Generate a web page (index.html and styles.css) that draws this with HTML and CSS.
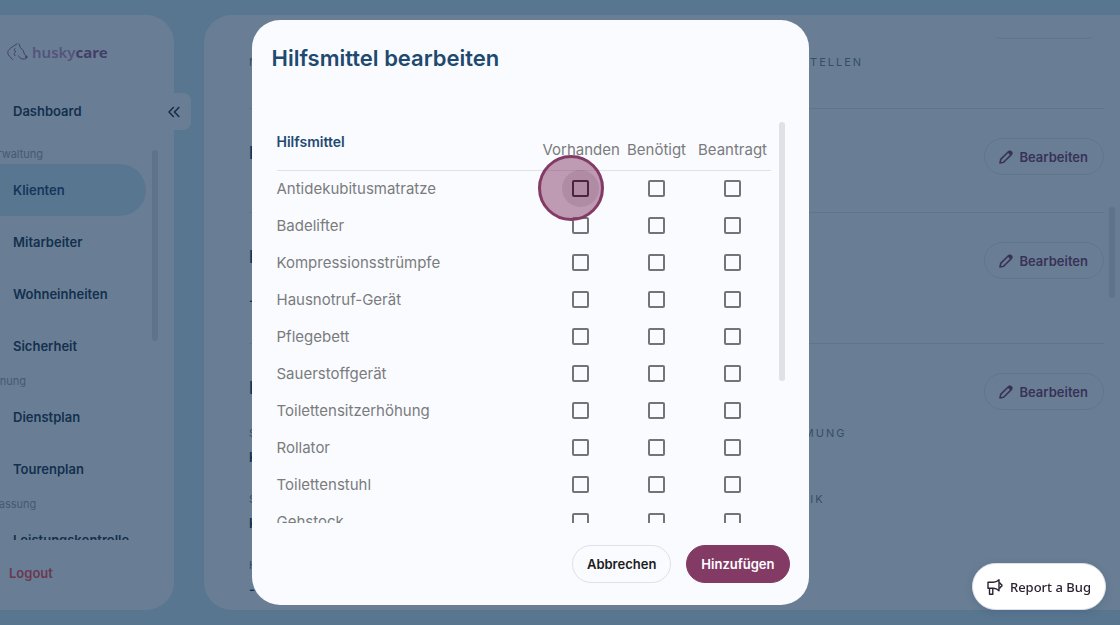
FILE: index.html
```html
<!DOCTYPE html>
<html lang="de">
<head>
  <meta charset="UTF-8">
  <title>Hilfsmittel bearbeiten | huskycare</title>
  <link rel="stylesheet" href="styles.css">
</head>
<body>

<svg class="sprite" aria-hidden="true">
  <symbol id="pencil" viewBox="0 0 14 14">
    <path d="M1 13l.7-3.600L9.400 1.700a1.400 1.400 0 0 1 2 0l.9.9a1.400 1.400 0 0 1 0 2L4.600 12.300z" fill="none" stroke="currentColor" stroke-width="1.600" stroke-linejoin="round"/>
    <path d="M8.600 2.500l1.400-1.500a1.800 1.800 0 0 1 2.500 0l.5.5a1.800 1.800 0 0 1 0 2.500l-1.500 1.400z" fill="currentColor"/>
  </symbol>
</svg>

<div class="app">
  <aside class="sidebar">
    <div class="logo">
      <svg width="21" height="18" viewBox="0 0 21 18" fill="none" stroke="currentColor" stroke-linecap="round">
        <path d="M7.500 2.500C4.500 4.500.8 6.500.8 9.500c0 3 2.500 4.500 5 7" />
        <path d="M7.500 2.500L10 .8M12 1l1.300 3.500 3 3.200 1.200 3.800 2.500 2" />
        <path d="M8 5.500c-1.500 1.500-1 2.800 1 2.800-2 1.500-2.200 3-1 4.500M11.500 12.800c1.500 3.500 5 4 7.500 2.700" />
        <circle cx="19.300" cy="14" r="1.200" fill="currentColor" stroke="none" />
      </svg>
      <span class="logo-text">husky<b>care</b></span>
    </div>
    <a class="nav-item" href="#">Dashboard</a>
    <button class="collapse" aria-label="Menü einklappen">
      <svg width="12" height="12" viewBox="0 0 12 12" fill="none" stroke="currentColor" stroke-width="1.600"><path d="M5.800 1L1 6l4.800 5M11.300 1L6.500 6l4.800 5"/></svg>
    </button>
    <nav class="nav">
      <div class="nav-label">Verwaltung</div>
      <a class="nav-item active" href="#">Klienten</a>
      <a class="nav-item" href="#">Mitarbeiter</a>
      <a class="nav-item" href="#">Wohneinheiten</a>
      <a class="nav-item" href="#">Sicherheit</a>
      <div class="nav-label">Planung</div>
      <a class="nav-item" href="#">Dienstplan</a>
      <a class="nav-item" href="#">Tourenplan</a>
      <div class="nav-label">Erfassung</div>
      <a class="nav-item" href="#">Leistungskontrolle</a>
      <div class="scroll-thumb"></div>
    </nav>
    <a class="logout" href="#">Logout</a>
  </aside>

  <main class="main">
    <div class="content">
      <section class="section first">
        <div class="section-head"><h2>Kontakte</h2><button class="edit"><svg width="14" height="14"><use href="#pencil"/></svg>Bearbeiten</button></div>
        <div class="fields">
          <div class="label">Notizen</div>
          <div class="label">Anlaufstellen</div>
        </div>
      </section>
      <section class="section">
        <div class="section-head"><h2>Diagnosen</h2><button class="edit"><svg width="14" height="14"><use href="#pencil"/></svg>Bearbeiten</button></div>
      </section>
      <section class="section note">
        <div class="section-head"><h2>Hilfsmittel</h2><button class="edit"><svg width="14" height="14"><use href="#pencil"/></svg>Bearbeiten</button></div>
        <div class="value">-</div>
      </section>
      <section class="section">
        <div class="section-head"><h2>Hinweise</h2><button class="edit"><svg width="14" height="14"><use href="#pencil"/></svg>Bearbeiten</button></div>
        <div class="fields">
          <div><div class="label">Sehhilfe</div><div class="value">Keine</div></div>
          <div><div class="label">Einstimmung</div></div>
          <div><div class="label">Sprache</div><div class="value">Keine</div></div>
          <div><div class="label">Poliklinik</div></div>
          <div><div class="label">Hinweis</div><div class="value">-</div></div>
        </div>
      </section>
    </div>
    <div class="scroll-thumb"></div>
  </main>
</div>

<div class="backdrop">
  <div class="modal" role="dialog" aria-modal="true" aria-labelledby="modalTitle">
    <h1 class="modal-title" id="modalTitle">Hilfsmittel bearbeiten</h1>
    <div class="modal-body">
      <table class="aids">
        <thead>
          <tr><th class="name" scope="col">Hilfsmittel</th><th scope="col">Vorhanden</th><th scope="col">Benötigt</th><th scope="col">Beantragt</th></tr>
        </thead>
        <tbody>
          <tr>
            <td>Antidekubitusmatratze</td>
            <td><span class="check-wrap"><input class="hovered" type="checkbox" aria-label="Antidekubitusmatratze vorhanden"><span class="ripple"></span><span class="pointer"></span></span></td>
            <td><input type="checkbox" aria-label="Antidekubitusmatratze benötigt"></td>
            <td><input type="checkbox" aria-label="Antidekubitusmatratze beantragt"></td>
          </tr>
          <tr>
            <td>Badelifter</td>
            <td><input type="checkbox" aria-label="Badelifter vorhanden"></td>
            <td><input type="checkbox" aria-label="Badelifter benötigt"></td>
            <td><input type="checkbox" aria-label="Badelifter beantragt"></td>
          </tr>
          <tr>
            <td>Kompressionsstrümpfe</td>
            <td><input type="checkbox" aria-label="Kompressionsstrümpfe vorhanden"></td>
            <td><input type="checkbox" aria-label="Kompressionsstrümpfe benötigt"></td>
            <td><input type="checkbox" aria-label="Kompressionsstrümpfe beantragt"></td>
          </tr>
          <tr>
            <td>Hausnotruf-Gerät</td>
            <td><input type="checkbox" aria-label="Hausnotruf-Gerät vorhanden"></td>
            <td><input type="checkbox" aria-label="Hausnotruf-Gerät benötigt"></td>
            <td><input type="checkbox" aria-label="Hausnotruf-Gerät beantragt"></td>
          </tr>
          <tr>
            <td>Pflegebett</td>
            <td><input type="checkbox" aria-label="Pflegebett vorhanden"></td>
            <td><input type="checkbox" aria-label="Pflegebett benötigt"></td>
            <td><input type="checkbox" aria-label="Pflegebett beantragt"></td>
          </tr>
          <tr>
            <td>Sauerstoffgerät</td>
            <td><input type="checkbox" aria-label="Sauerstoffgerät vorhanden"></td>
            <td><input type="checkbox" aria-label="Sauerstoffgerät benötigt"></td>
            <td><input type="checkbox" aria-label="Sauerstoffgerät beantragt"></td>
          </tr>
          <tr>
            <td>Toilettensitzerhöhung</td>
            <td><input type="checkbox" aria-label="Toilettensitzerhöhung vorhanden"></td>
            <td><input type="checkbox" aria-label="Toilettensitzerhöhung benötigt"></td>
            <td><input type="checkbox" aria-label="Toilettensitzerhöhung beantragt"></td>
          </tr>
          <tr>
            <td>Rollator</td>
            <td><input type="checkbox" aria-label="Rollator vorhanden"></td>
            <td><input type="checkbox" aria-label="Rollator benötigt"></td>
            <td><input type="checkbox" aria-label="Rollator beantragt"></td>
          </tr>
          <tr>
            <td>Toilettenstuhl</td>
            <td><input type="checkbox" aria-label="Toilettenstuhl vorhanden"></td>
            <td><input type="checkbox" aria-label="Toilettenstuhl benötigt"></td>
            <td><input type="checkbox" aria-label="Toilettenstuhl beantragt"></td>
          </tr>
          <tr>
            <td>Gehstock</td>
            <td><input type="checkbox" aria-label="Gehstock vorhanden"></td>
            <td><input type="checkbox" aria-label="Gehstock benötigt"></td>
            <td><input type="checkbox" aria-label="Gehstock beantragt"></td>
          </tr>
        </tbody>
      </table>
      <div class="scroll-thumb"></div>
    </div>
    <div class="modal-footer">
      <button class="btn">Abbrechen</button>
      <button class="btn primary">Hinzufügen</button>
    </div>
  </div>
</div>

<button class="report">
  <svg width="16" height="16" viewBox="0 0 16 16" fill="none" stroke="currentColor" stroke-width="1.400" stroke-linejoin="round">
    <path d="M1 3.300h5.500c2 0 4-1 5.500-2.500v11c-1.500-1.500-3.500-2.500-5.500-2.500H1z"/>
    <path d="M2.500 9.500v5.800h3.300V9.500M12 4c1.500-.3 1.800.8 1.800 1.300 1.600.4 1.600 1.900 0 2.300 0 .8-.5 1.500-1.800 1.300"/>
  </svg>
  Report a Bug
</button>

</body>
</html>
```
FILE: styles.css
```css
* {
  box-sizing: border-box;
}
body {
  margin: 0;
  height: 100vh;
  overflow: hidden;
  background: #d3e7f5;
  color: #29364b;
  font-family: Inter, "Liberation Sans", sans-serif;
  font-size: 13px;
}
button {
  font-family: inherit;
  font-size: 13px;
  font-weight: 600;
  cursor: pointer;
}
a {
  color: inherit;
  text-decoration: none;
}
.sprite {
  display: none;
}

/* the app starts left of the window, the sidebar is partly scrolled out */
.app {
  display: flex;
  gap: 30px;
  height: 100vh;
  margin-left: -60px;
  padding: 15px 0 15px 15px;
}
.sidebar {
  position: relative;
  display: flex;
  flex-direction: column;
  flex: none;
  width: 219px;
  background: #f9fbff;
  border-radius: 28px;
}
.logo {
  display: flex;
  align-items: center;
  gap: 4px;
  height: 70px;
  padding: 4px 0 0 52px;
  color: #a05a90;
}
.logo-text {
  font-family: "Noto Sans", sans-serif;
  font-size: 15px;
  color: #c890c0;
  font-weight: 600;
}
.logo-text b {
  color: #a05a90;
  font-weight: 700;
}
.nav-item {
  display: flex;
  align-items: center;
  flex: none;
  height: 52px;
  margin-right: 28px;
  padding-left: 58px;
  font-weight: 600;
}
.nav-item.active {
  background: #d3e7f5;
  border-radius: 26px;
  color: #1f4a70;
}
.collapse {
  position: absolute;
  top: 78px;
  right: -17px;
  display: flex;
  align-items: center;
  height: 37px;
  padding: 0 11px;
  border: none;
  border-radius: 8px;
  background: #f9fbff;
  color: #29364b;
}
.nav {
  position: relative;
  flex: 1;
  min-height: 0;
  margin-top: 8px;
  overflow: hidden;
}
.nav-label {
  height: 19px;
  padding-left: 29px;
  line-height: 19px;
  font-size: 11px;
  color: #a0a0a8;
}
.logout {
  padding: 23px 54px 27px;
  line-height: 20px;
  font-weight: 600;
  color: #ff4c55;
}
.scroll-thumb {
  position: absolute;
  width: 6px;
  border-radius: 3px;
  background: #dfe1e6;
}
.nav .scroll-thumb {
  top: 5px;
  right: 16px;
  height: 191px;
}

.main {
  position: relative;
  flex: 1;
  min-width: 0;
  padding: 22px 16px 0 45px;
  background: #f9fbff;
  border-radius: 28px 0 0 28px;
}
.main .scroll-thumb {
  top: 192px;
  right: 5px;
  height: 91px;
}
.content {
  height: 100%;
  overflow: hidden;
}
.section {
  padding: 29px 0 37px;
  border-top: 1px solid #e0e3e8;
}
.section.first {
  margin-top: -65px;
  padding-bottom: 38px;
}
.section-head {
  display: flex;
  align-items: flex-start;
  justify-content: space-between;
}
.section h2 {
  margin: 0;
  font-size: 17px;
  font-weight: 600;
  line-height: 30px;
  color: #1f4a70;
}
.edit {
  display: flex;
  align-items: center;
  gap: 6px;
  height: 37px;
  padding: 0 15px 0 14px;
  border: 1px solid #e0e3e8;
  border-radius: 19px;
  background: none;
  color: #833b66;
}
.fields {
  display: grid;
  grid-template-columns: 58% 1fr;
  row-gap: 24px;
  margin-top: 15px;
}
.label {
  line-height: 16px;
  font-size: 11px;
  letter-spacing: 2px;
  text-transform: uppercase;
  color: #7c828c;
}
.value {
  line-height: 20px;
  font-weight: 600;
}
.fields .value {
  margin-top: 6px;
}
.section.note {
  padding-bottom: 33px;
}
.section.note .value {
  margin-top: 11px;
}

.backdrop {
  position: fixed;
  inset: 0 0 0 -60px;
  display: flex;
  align-items: center;
  justify-content: center;
  background: rgba(9, 44, 78, 0.6);
}
.modal {
  display: flex;
  flex-direction: column;
  width: 557px;
  height: calc(100vh - 40px);
  background: #f9fbff;
  border-radius: 28px;
}
.modal-title {
  margin: 0;
  padding: 24px 20px 50px;
  font-size: 22px;
  line-height: 28px;
  font-weight: 600;
  color: #1f4a70;
}
.modal-body {
  position: relative;
  flex: 1;
  min-height: 0;
  padding: 0 38px 0 25px;
  overflow: hidden;
}
.modal-body .scroll-thumb {
  top: 0;
  right: 24px;
  height: 259px;
}
.aids {
  width: 100%;
  table-layout: fixed;
  border-collapse: collapse;
  font-size: 15px;
  color: #7b7b7d;
}
.aids th {
  width: 76px;
  height: 48px;
  padding: 0 0 10px;
  border-bottom: 1px solid #dfe1e6;
  line-height: 20px;
  font-weight: 400;
  vertical-align: bottom;
}
.aids th.name {
  width: auto;
  padding-bottom: 18px;
  text-align: left;
  font-size: 14px;
  font-weight: 600;
  color: #1f4a70;
}
.aids td {
  height: 37px;
  padding: 0;
  text-align: center;
}
.aids td:first-child {
  text-align: left;
}
.aids input {
  appearance: none;
  display: block;
  width: 17px;
  height: 17px;
  margin: 0 auto;
  border: 2px solid #727476;
  border-radius: 2px;
}
.aids input.hovered {
  border-color: #1d0a1c;
}
.check-wrap {
  position: relative;
  display: block;
  width: 17px;
  margin: 0 auto;
}
.ripple {
  position: absolute;
  top: -10px;
  left: -10px;
  width: 37px;
  height: 37px;
  border-radius: 50%;
  background: rgba(0, 0, 0, 0.12);
}
/* click marker */
.pointer {
  position: absolute;
  top: -25px;
  left: -34px;
  width: 66px;
  height: 66px;
  border: 3px solid #833b66;
  border-radius: 50%;
  background: rgba(131, 59, 102, 0.5);
}
.modal-footer {
  display: flex;
  justify-content: flex-end;
  gap: 15px;
  padding: 22px 19px;
}
.btn {
  height: 38px;
  padding: 0 14px;
  border: 1px solid #dfe1e6;
  border-radius: 19px;
  background: none;
  color: #1c1c20;
}
.btn.primary {
  border-color: #833b66;
  background: #833b66;
  color: #fff;
}

.report {
  position: fixed;
  right: 14px;
  bottom: 15px;
  display: flex;
  align-items: center;
  gap: 7px;
  height: 47px;
  padding: 0 14px;
  border: 1px solid #dfe1e6;
  border-radius: 24px;
  background: #fff;
  box-shadow: 0 2px 8px rgba(9, 44, 78, 0.15);
  color: #2b2233;
  font-family: "Noto Sans", sans-serif;
  font-size: 13px;
  font-weight: 500;
}
```
